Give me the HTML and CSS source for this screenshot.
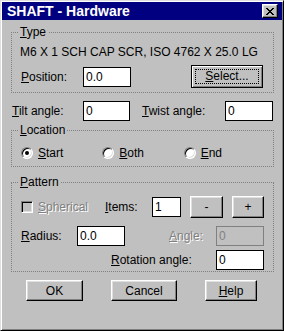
FILE: index.html
```html
<!DOCTYPE html>
<html lang="en">
	<head>
		<meta charset="UTF-8" />
		<meta name="viewport" content="width=device-width, initial-scale=1.0" />
		<title>SHAFT - Hardware</title>
		<link rel="stylesheet" href="styles.css">
	</head>

	<body>
		<div class="window">
			<div class="titlebar">
				<span class="title">SHAFT - Hardware</span>
				<button class="close-btn" type="button">
					<svg width="8" height="7" viewBox="0 0 8 7" shape-rendering="crispEdges">
						<path fill="#000" d="M0 0h2v1h-2z M6 0h2v1h-2z M1 1h2v1h-2z M5 1h2v1h-2z M2 2h4v1h-4z M3 3h2v1h-2z M2 4h4v1h-4z M1 5h2v1h-2z M5 5h2v1h-2z M0 6h2v1h-2z M6 6h2v1h-2z" />
					</svg>
				</button>
			</div>

			<div class="dialog-body">
				<fieldset class="group type-group">
					<legend><u>T</u>ype</legend>
					<div class="part-name">M6 X 1 SCH CAP SCR, ISO 4762 X 25.0 LG</div>
					<div class="row position-row">
						<label class="lbl pos-lbl"><u>P</u>osition:</label>
						<input class="field pos-field" type="text" value="0.0" readonly />
						<button class="btn default-btn select-btn" type="button"><span class="focus-rect"><u>S</u>elect...</span></button>
					</div>
				</fieldset>

				<div class="row angle-row">
					<label class="lbl tilt-lbl"><u>T</u>ilt angle:</label>
					<input class="field tilt-field" type="text" value="0" readonly />
					<label class="lbl twist-lbl"><u>T</u>wist angle:</label>
					<input class="field twist-field" type="text" value="0" readonly />
				</div>

				<fieldset class="group location-group">
					<legend><u>L</u>ocation</legend>
					<div class="row radio-row">
						<div class="radio-item"><span class="radio on"></span><span><u>S</u>tart</span></div>
						<div class="radio-item"><span class="radio"></span><span><u>B</u>oth</span></div>
						<div class="radio-item"><span class="radio"></span><span><u>E</u>nd</span></div>
					</div>
				</fieldset>

				<fieldset class="group pattern-group">
					<legend><u>P</u>attern</legend>
					<div class="row items-row">
						<div class="check-item"><span class="check"></span><span class="dis"><u>S</u>pherical</span></div>
						<label class="lbl items-lbl"><u>I</u>tems:</label>
						<input class="field items-field" type="text" value="1" readonly />
						<button class="btn step-btn minus-btn" type="button">-</button>
						<button class="btn step-btn plus-btn" type="button">+</button>
					</div>
					<div class="row radius-row">
						<label class="lbl radius-lbl"><u>R</u>adius:</label>
						<input class="field radius-field" type="text" value="0.0" readonly />
						<label class="lbl angle-lbl dis"><u>A</u>ngle:</label>
						<input class="field off" type="text" value="0" readonly />
					</div>
					<div class="row rotation-row">
						<label class="lbl rotation-lbl"><u>R</u>otation angle:</label>
						<input class="field" type="text" value="0" readonly />
					</div>
				</fieldset>

				<div class="row actions">
					<button class="btn ok-btn" type="button">OK</button>
					<button class="btn cancel-btn" type="button">Cancel</button>
					<button class="btn help-btn" type="button"><u>H</u>elp</button>
				</div>
			</div>
		</div>
	</body>
</html>
```

FILE: styles.css
```css
* {
	box-sizing: border-box;
}

body {
	margin: 0;
	background: #c0c0c0;
	color: #000;
	font: 12px/14px "Liberation Sans Narrow", "Arial Narrow", "Liberation Sans", sans-serif;
}

u {
	text-decoration: underline;
	text-underline-offset: 1px;
}

.window {
	display: flex;
	flex-direction: column;
	width: 284px;
	height: 331px;
	padding: 1px;
	background: #c0c0c0;
	border: 1px solid;
	border-color: #dfdfdf #000 #000 #dfdfdf;
	box-shadow: inset 1px 1px #fff, inset -1px -1px #808080;
}

.titlebar {
	display: flex;
	align-items: center;
	justify-content: space-between;
	height: 18px;
	padding: 0 4px 0 5px;
	background: #000080;
	color: #fff;
}

.title {
	font-weight: bold;
	font-size: 14px;
	line-height: 18px;
}

.close-btn {
	display: flex;
	align-items: center;
	justify-content: center;
	width: 16px;
	height: 14px;
	padding: 0;
	background: #c0c0c0;
	border: 1px solid;
	border-color: #fff #000 #000 #fff;
	box-shadow: inset -1px -1px #808080, inset 1px 1px #dfdfdf;
}

.dialog-body {
	flex: 1;
	padding: 0 8px 0 9px;
}

.group {
	margin: 0;
	min-width: 0;
	padding: 0 8px;
	border: 1px dotted #808080;
}

.group legend {
	margin-left: -2px;
	padding: 0 2px;
	line-height: 12px;
}

.row {
	display: flex;
	align-items: center;
}

.lbl {
	flex-shrink: 0;
	white-space: nowrap;
}

.field {
	flex-shrink: 0;
	height: 20px;
	padding: 0 2px;
	margin: 0;
	font: inherit;
	color: #000;
	background: #fff;
	border: 1px solid #000;
	border-radius: 0;
	outline: none;
}

.field.off {
	width: 48px;
	color: #808080;
	background: #c0c0c0;
	border-color: #808080;
}

.dis {
	color: #808080;
	text-shadow: 1px 1px 0 #fff;
}

.btn {
	flex-shrink: 0;
	height: 21px;
	padding: 0;
	font: inherit;
	color: #000;
	background: #c0c0c0;
	border: 1px solid;
	border-color: #fff #000 #000 #fff;
	border-radius: 0;
	box-shadow: inset -1px -1px #808080, inset 1px 1px #dfdfdf;
}

/* type */
.type-group {
	margin-top: 6px;
	padding-top: 7px;
	padding-bottom: 4px;
}

.part-name {
	white-space: nowrap;
}

.position-row {
	margin-top: 6px;
}

.pos-lbl {
	width: 63px;
	padding-left: 1px;
}

.pos-field {
	width: 48px;
}

.default-btn {
	display: flex;
	margin-left: 60px;
	width: 72px;
	height: 23px;
	border-color: #000;
	box-shadow: inset 1px 1px #fff, inset -1px -1px #808080;
}

.focus-rect {
	flex: 1;
	margin: 3px;
	line-height: 13px;
	border: 1px dotted #000;
}

/* angles */
.angle-row {
	margin-top: 8px;
}

.tilt-lbl {
	width: 72px;
	padding-left: 1px;
}

.tilt-field {
	width: 47px;
}

.twist-lbl {
	width: 95px;
	padding-left: 12px;
}

.twist-field {
	width: 48px;
}

/* location */
.location-group {
	margin-top: 3px;
	padding-top: 10px;
	padding-bottom: 6px;
}

.radio-row {
	padding-left: 1px;
}

.radio-item {
	display: flex;
	align-items: center;
	gap: 5px;
	width: 85px;
}

.radio {
	position: relative;
	width: 12px;
	height: 12px;
	background: #fff;
	border: 1px solid;
	border-color: #808080 #fff #fff #808080;
	border-radius: 50%;
	box-shadow: inset 1px 1px #000, inset -1px -1px #dfdfdf;
}

.radio.on::after {
	content: "";
	position: absolute;
	left: 3px;
	top: 3px;
	width: 4px;
	height: 4px;
	background: #000;
	border-radius: 50%;
}

/* pattern */
.pattern-group {
	margin-top: 9px;
	padding-top: 8px;
	padding-bottom: 1px;
}

.check-item {
	display: flex;
	align-items: center;
	gap: 5px;
	width: 85px;
	padding-left: 1px;
}

.check {
	width: 12px;
	height: 12px;
	background: #c0c0c0;
	border: 1px solid;
	border-color: #808080 #fff #fff #808080;
	box-shadow: inset 1px 1px #000, inset -1px -1px #dfdfdf;
}

.items-lbl {
	width: 47px;
}

.items-field {
	width: 29px;
}

.step-btn {
	height: 22px;
	margin-left: 9px;
}

.minus-btn {
	width: 33px;
}

.plus-btn {
	width: 32px;
}

.radius-row {
	margin-top: 8px;
}

.radius-lbl {
	width: 57px;
	padding-left: 1px;
}

.radius-field {
	width: 48px;
}

.angle-lbl {
	width: 47px;
	margin-left: 44px;
}

.rotation-row {
	margin-top: 4px;
	padding-left: 91px;
}

.rotation-lbl {
	width: 105px;
}

.rotation-row .field {
	width: 48px;
}

/* actions */
.actions {
	margin-top: 8px;
}

.ok-btn {
	width: 57px;
	margin-left: 15px;
}

.cancel-btn {
	width: 66px;
	margin-left: 28px;
}

.help-btn {
	width: 52px;
	margin-left: 28px;
}
```
